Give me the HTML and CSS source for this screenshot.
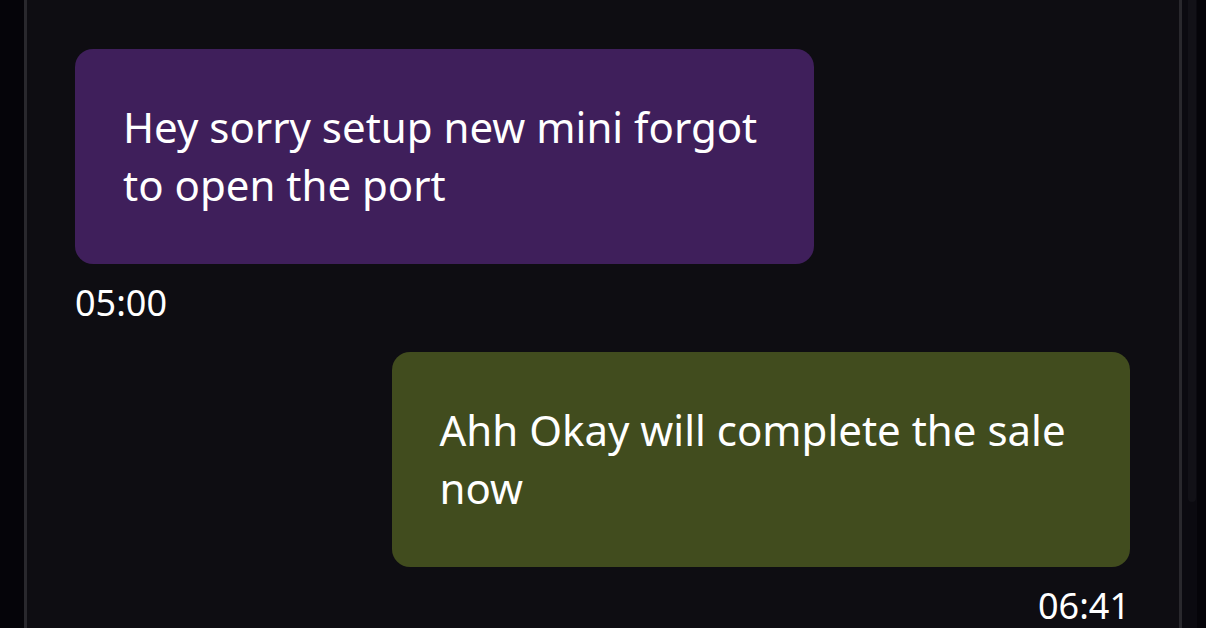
FILE: index.html
```html
<!DOCTYPE html>
<html>
<head>
<meta charset="utf-8">
<link rel="stylesheet" href="styles.css">
</head>
<body>
<div class="app">
  <div class="gutter"></div>
  <main class="chat">
    <div class="msg incoming">
      <div class="bubble purple">Hey sorry setup new mini forgot to open the port</div>
      <div class="time">05:00</div>
    </div>
    <div class="msg outgoing">
      <div class="bubble green">Ahh Okay will complete the sale now</div>
      <div class="time">06:41</div>
    </div>
  </main>
  <div class="scroll">
    <div class="thumb"></div>
  </div>
</div>
</body>
</html>
```
FILE: styles.css
```css
html, body {
  margin: 0;
  padding: 0;
  height: 100%;
  overflow: hidden;
  background: #050409;
}
.app {
  display: flex;
  height: 628px;
  font-family: "Noto Sans", "Open Sans", sans-serif;
  color: #ffffff;
}
.gutter {
  width: 24px;
  flex: none;
}
.chat {
  flex: none;
  width: 1158px;
  box-sizing: border-box;
  background: #0e0d12;
  border-left: 3px solid #29282d;
  border-right: 3px solid #29282d;
  padding: 49px 49px 0 48px;
  display: flex;
  flex-direction: column;
  gap: 25px;
}
.msg {
  display: flex;
  flex-direction: column;
}
.msg.outgoing {
  align-items: flex-end;
}
.bubble {
  width: 70%;
  box-sizing: border-box;
  padding: 49px 48px 50px 48px;
  border-radius: 18px;
  font-size: 42px;
  line-height: 58px;
}
.purple { background: #3f1f5b; }
.green { background: #414c1e; }
.time {
  margin-top: 15px;
  font-size: 36px;
  line-height: 48px;
}
.scroll {
  width: 15px;
  flex: none;
  background: #0b0a10;
  padding-left: 6px;
  box-sizing: border-box;
}
.thumb {
  width: 8px;
  height: 502px;
  background: #121117;
  border-radius: 0 0 4px 4px;
}
```
